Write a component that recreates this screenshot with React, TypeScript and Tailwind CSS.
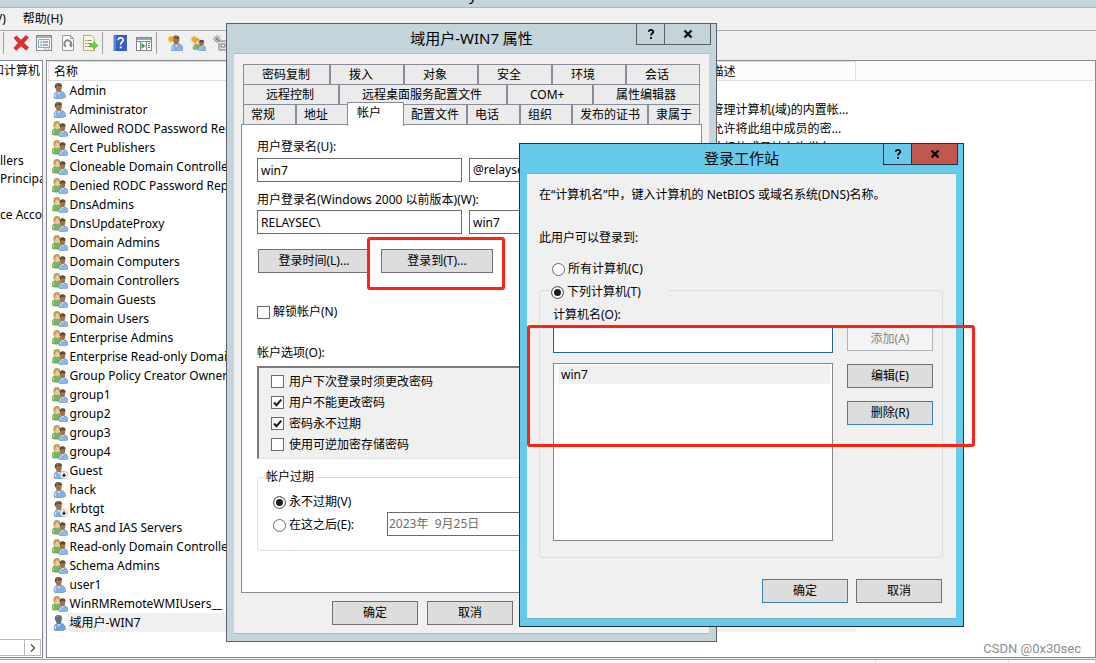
import React, { useId } from "react";

type Kind = "user" | "group" | "disabled" | "muted";

function PersonShape({ muted = false }: { muted?: boolean }) {
  return (
    <g>
      <path d="M2.200 15.200C1.700 11.800 2.600 9.300 5 8.300l4.500-.1c3 .9 4.200 3.200 4 6.300-2.600 1.600-8.500 1.900-11.300.7z" fill={muted ? "#6fa3d8" : "#84b1e4"} stroke="#4c7fbd" strokeWidth=".5" />
      <path d="M4 10.500c-.8 1.200-.9 2.700-.7 3.700" stroke="#c8e0f8" strokeWidth="1.200" fill="none" />
      <path d="M5.200 8.500l1.900 3 1.100-2.700z" fill="#f3f7fc" />
      <path d="M3.200 3.400C3.400 1.100 5 .2 7 .4c2.100.2 3.100 1.700 2.800 4-.2 2.400-1.100 4.900-2.800 4.900-2.100 0-3.600-3.100-3.800-5.900z" fill={muted ? "#5a7480" : "#a8703f"} />
      <path d="M2.900 5C2.300 1.700 3.900 0 6.500 0c2.500 0 3.800 1.300 3.400 3.300-1.900.2-3.400-.2-4.500-.8-.8.500-1.400 1.200-1.500 2.700z" fill={muted ? "#5b6d78" : "#5c4a3e"} />
      <path d="M4.500 1.700C5.500.9 6.500.8 7.500 1" stroke="#a49a92" strokeWidth=".8" fill="none" />
    </g>
  );
}

function GroupShape() {
  return (
    <g>
      <path d="M.3 13.600C0 10 .7 8 3.200 7.300l4.300.2c1.700 1 1.800 3.500 1.500 6-2.700.8-6 .9-8.700.1z" fill="#7ab55d" stroke="#4a8c38" strokeWidth=".5" />
      <path d="M1.700 9.500c-.5 1-.6 2-.5 3" stroke="#b5dca0" strokeWidth="1" fill="none" />
      <ellipse cx="4.900" cy="4.200" rx="3" ry="3.800" fill="#efc998" />
      <path d="M1.500 5.500C1 1.600 2.500 0 5 0c2.400 0 3.600 1.800 3.100 4.400C6.500 4 5.400 3 4.900 2.100 4.200 3.200 3.400 4 2.900 7.200z" fill="#c2a05c" />
      <path d="M7 15.300c-.4-3 .2-4.700 2.500-5.500h3.300c2.600.8 3.200 2.500 3 5.300-2.600.9-6.300.9-8.800.2z" fill="#8ab6e8" stroke="#4c7fbd" strokeWidth=".5" />
      <path d="M8.600 11.500c-.5.800-.5 1.800-.4 2.700" stroke="#d0e4fa" strokeWidth="1" fill="none" />
      <path d="M9.600 9.700l1.300 2 .8-2z" fill="#fff" />
      <ellipse cx="10.600" cy="6.400" rx="2.600" ry="3.600" fill="#a8703f" />
      <path d="M7.700 6.200c-.5-2.800.8-4 3-4s3.200 1.300 2.800 3.400c-1.600 0-2.700-.4-3.600-1-.7.400-1 1-1 1.800z" fill="#5c4a3e" />
    </g>
  );
}

function AccountIcon({ kind }: { kind: Kind }) {
  return (
    <svg viewBox="0 0 16 16" className="h-4 w-4 shrink-0" aria-hidden="true">
      {kind === "group" ? <GroupShape /> : <PersonShape muted={kind === "muted"} />}
      {kind === "disabled" && (
        <g>
          <circle cx="12" cy="11.800" r="3.700" fill="#fff" stroke="#9a9a9a" strokeWidth=".6" />
          <path d="M12 9.700v3M10.400 12l1.600 1.800 1.600-1.800z" stroke="#222" strokeWidth="1" fill="#222" />
        </g>
      )}
    </svg>
  );
}

function Spark() {
  return <path d="M4 0l.8 2.200L7 1.200 6 3.200 8.200 4 6 4.800l1 2-2.200-.9L4 8.200l-.8-2.300-2.200.9 1-2L0 4l2-.8-1-2 2.200 1z" fill="#f5a81c" />;
}

const tools: { name: string; gap: string; art: React.ReactNode }[] = [
  { name: "删除", gap: "ml-[9px]", art: <path d="M1 3l2.500-2L8 5.200 12.800.6 15.500 2.500 10.700 8l5 4.600-2.600 2.600L8 10.700 3.300 15.500.8 13 5.300 8z" fill="#e33030" stroke="#b01818" strokeWidth=".6" /> },
  { name: "属性", gap: "ml-[7px]", art: <g><rect x=".5" y=".5" width="15" height="15" fill="#fafafa" stroke="#858c94" /><path d="M1 2h14" stroke="#a8b0b8" strokeWidth="2" /><path d="M2.500 4.500h11v8h-11z" fill="#eef3f8" stroke="#9aa4ae" /><path d="M4 7h2M4 10h2" stroke="#2aa3d8" /><path d="M7 7h5M7 10h5" stroke="#5d6d7e" /><path d="M8 14h2M11.500 14h2" stroke="#8fa0b2" /></g> },
  { name: "刷新", gap: "ml-2", art: <g><path d="M2.500.5h8l3 3v12h-11z" fill="#f7f7f7" stroke="#9a9a9a" /><path d="M10.500.5v3h3" fill="none" stroke="#9a9a9a" /><path d="M6 11.500A3.300 3.300 0 1 1 10.800 10" fill="none" stroke="#858585" strokeWidth="1.800" /><path d="M8.500 9.500l4.300-.5-1.300 3.800z" fill="#858585" /></g> },
  { name: "导出列表", gap: "ml-[6px]", art: <g><path d="M1.500.5h8l3 3v12h-11z" fill="#fdf6cf" stroke="#b3ab84" /><path d="M3.500 5.500h1M3.500 8.500h1M3.500 11.500h1" stroke="#555" /><path d="M5.500 5.500h4M5.500 8.500h4M5.500 11.500h4" stroke="#8b8ba0" /><path d="M8 9h3.500V6.700L16 10.500l-4.500 3.800V12H8z" fill="#6fd044" stroke="#3a9a1c" strokeWidth=".5" /></g> },
  { name: "帮助", gap: "ml-[9px]", art: <g><rect x="2" y="0" width="12.500" height="16" fill="#3560c8" stroke="#1d3a8c" strokeWidth=".6" /><path d="M3 0v16" stroke="#7d9be6" strokeWidth="1.200" /><path d="M6.200 5.200c0-3.200 5-3.200 5-.2 0 2-2.500 2-2.500 4.700" fill="none" stroke="#fff" strokeWidth="1.700" /><rect x="7.800" y="11.300" width="1.900" height="1.900" fill="#fff" /></g> },
  { name: "查看", gap: "ml-2", art: <g><rect x=".5" y="2.500" width="15" height="13" fill="#fff" stroke="#7d858e" /><path d="M1 4h14" stroke="#9aa6b2" strokeWidth="2" /><path d="M1 6.500h14M4.500 7v8M10.500 7v8" stroke="#7d858e" /><path d="M5.500 8l4 3-4 3z" fill="#2fa838" /><path d="M12 8.500h2M12 10.500h2M12 12.500h2" stroke="#4a74b8" /></g> },
  { name: "新建用户", gap: "ml-[10px]", art: <g><g transform="translate(2.500 .5)"><PersonShape /></g><Spark /></g> },
  { name: "新建组", gap: "ml-[7px]", art: <g><g transform="translate(3 3) scale(.82)"><GroupShape /></g><Spark /></g> },
  { name: "新建组织单位", gap: "ml-[7px]", art: <g><path d="M4 6h10v9H6V8" fill="#e5e5e5" stroke="#777" /><path d="M8 9h4v3H8z" fill="#fff" stroke="#777" /><path d="M4 0v8M0 4h8M1 1l6 6M7 1L1 7" stroke="#888" /></g> },
];

const accounts: [string, Kind, string?][] = [
  ["Admin", "user"],
  ["Administrator", "user", "管理计算机(域)的内置帐..."],
  ["Allowed RODC Password Replication Group", "group", "允许将此组中成员的密..."],
  ["Cert Publishers", "group", "此组的成员被允许发布..."],
  ["Cloneable Domain Controllers", "group"],
  ["Denied RODC Password Replication Group", "group"],
  ["DnsAdmins", "group"],
  ["DnsUpdateProxy", "group"],
  ["Domain Admins", "group"],
  ["Domain Computers", "group"],
  ["Domain Controllers", "group"],
  ["Domain Guests", "group"],
  ["Domain Users", "group"],
  ["Enterprise Admins", "group"],
  ["Enterprise Read-only Domain Controllers", "group"],
  ["Group Policy Creator Owners", "group"],
  ["group1", "group"],
  ["group2", "group"],
  ["group3", "group"],
  ["group4", "group"],
  ["Guest", "disabled"],
  ["hack", "user"],
  ["krbtgt", "disabled"],
  ["RAS and IAS Servers", "group"],
  ["Read-only Domain Controllers", "group"],
  ["Schema Admins", "group"],
  ["user1", "user"],
  ["WinRMRemoteWMIUsers__", "group"],
  ["域用户-WIN7", "muted"],
];

const tree = ["和计算机", "", "", "", "", "llers", "Principals", "", "ce Accounts"];

function Check({ label, checked = false, gap = "gap-[3px]" }: { label: string; checked?: boolean; gap?: string }) {
  return (
    <label className={`flex items-center ${gap}`}>
      <span className="grid h-[13px] w-[13px]">
        <input type="checkbox" defaultChecked={checked} className="peer col-start-1 row-start-1 h-[13px] w-[13px] appearance-none border border-[#6b6b6b] bg-white" />
        <svg viewBox="0 0 13 13" className="pointer-events-none invisible col-start-1 row-start-1 h-[13px] w-[13px] peer-checked:visible" aria-hidden="true">
          <path d="M3 6.500l2.500 2.700L10.300 3.600" fill="none" stroke="#1e1e1e" strokeWidth="2.100" />
        </svg>
      </span>
      {label}
    </label>
  );
}

function Radio({ label, name, checked = false }: { label: string; name: string; checked?: boolean }) {
  return (
    <label className="flex items-center gap-[3px]">
      <input type="radio" name={name} defaultChecked={checked} className="h-[13px] w-[13px] appearance-none rounded-full border border-[#6b6b6b] bg-white checked:bg-[#1e1e1e] checked:shadow-[inset_0_0_0_2px_#fff]" />
      {label}
    </label>
  );
}

function Button({ children, width = "w-[86px]", tone = "normal" }: { children: React.ReactNode; width?: string; tone?: "normal" | "blue" | "off" }) {
  const look = {
    normal: "border-[#707070] bg-[#dddddd]",
    blue: "border-[#3c7fb1] bg-[#dddddd]",
    off: "border-[#adb2b5] bg-[#f4f4f4] text-[#838383]",
  }[tone];
  return (
    <button type="button" disabled={tone === "off"} className={`h-6 shrink-0 border ${width} ${look}`}>
      {children}
    </button>
  );
}

function Glyph({ kind }: { kind: "help" | "close" }) {
  return (
    <svg viewBox="0 0 10 10" className="h-[10px] w-[10px]" aria-hidden="true">
      {kind === "help" ? (
        <path d="M2.800 2.800C3 .3 7.300.3 7.300 2.700 7.300 4.400 5 4.200 5 6.600M5 8v2" fill="none" stroke="#000" strokeWidth="1.800" />
      ) : (
        <path d="M1.500 1.500l7 7M8.500 1.500l-7 7" stroke="#000" strokeWidth="2.300" />
      )}
    </svg>
  );
}

function Dialog({ title, place, active = false, children }: { title: string; place: string; active?: boolean; children: React.ReactNode }) {
  const id = useId();
  return (
    <section
      role="dialog"
      aria-labelledby={id}
      className={`absolute flex flex-col border px-[7px] pb-[7px] ${place} ${active ? "border-[#22343e] bg-[#66caea]" : "border-[#5c6068] bg-[#c3d5db]"}`}
    >
      <header className="grid h-[29px] shrink-0 grid-cols-1">
        <h2 id={id} className="col-start-1 row-start-1 self-center pb-[2px] text-center text-[15px] leading-5">{title}</h2>
        <div className={`col-start-1 row-start-1 -mt-px -mr-[2px] flex h-[22px] justify-self-end border ${active ? "border-[#22343e]" : "border-[#5c6068]"}`}>
          <button type="button" aria-label="帮助" className="grid w-[27px] place-items-center"><Glyph kind="help" /></button>
          <button type="button" aria-label="关闭" className={`grid w-[46px] place-items-center border-l ${active ? "border-[#22343e] bg-[#c1584f]" : "border-[#5c6068]"}`}><Glyph kind="close" /></button>
        </div>
      </header>
      <div className={`flex flex-1 flex-col border-y bg-[#f0f0f0] ${active ? "border-[#7fafc3]" : "border-[#b0bfc5]"}`}>{children}</div>
    </section>
  );
}

const upperTabs = [
  [["密码复制", "w-[87px]"], ["拨入", "w-[74px]"], ["对象", "w-[74px]"], ["安全", "w-[74px]"], ["环境", "w-[74px]"], ["会话", "flex-1"]],
  [["远程控制", "w-[96px]"], ["远程桌面服务配置文件", "w-[168px]"], ["COM+", "w-[86px]"], ["属性编辑器", "flex-1"]],
];

const lowerTabs = [["常规", "w-[53px]"], ["地址", "w-[50px]"], ["帐户", "w-[57px]"], ["配置文件", "w-[64px]"], ["电话", "w-[53px]"], ["组织", "w-[52px]"], ["发布的证书", "w-[76px]"], ["隶属于", "flex-1"]];

const field = "h-6 min-w-0 border border-[#6b6b6b] bg-white px-[3px] text-[12px]";

function PropertiesDialog() {
  return (
    <Dialog title="域用户-WIN7 属性" place="left-[226px] top-[23px] w-[491px]">
      <div className="mx-[9px] mt-[10px]" role="tablist">
        {upperTabs.map((row, i) => (
          <div key={i} className="flex h-5 border-t border-l border-[#8b8c99] bg-[#ebebeb]">
            {row.map(([name, width]) => (
              <button key={name} type="button" role="tab" className={`shrink-0 border-r-2 border-[#8b8c99] text-left whitespace-nowrap last:border-r ${i === 0 ? "pl-[18px]" : "pl-[22px]"} ${width}`}>{name}</button>
            ))}
          </div>
        ))}
        <div className="flex h-5 border-t border-l border-[#8b8c99]">
          {lowerTabs.map(([name, width]) =>
            name === "帐户" ? (
              <button key={name} type="button" role="tab" aria-selected="true" className={`z-10 -mt-[3px] -mb-[2px] border border-b-0 border-[#8b8c99] bg-white pb-[3px] pl-[9px] text-left ${width}`}>{name}</button>
            ) : (
              <button key={name} type="button" role="tab" className={`shrink-0 border-[#8b8c99] bg-[#ebebeb] pl-[7px] text-left whitespace-nowrap last:border-r ${name === "地址" ? "" : "border-r-2"} ${width}`}>{name}</button>
            ),
          )}
        </div>
      </div>
      <div role="tabpanel" className="mx-[7px] flex flex-col border border-[#8b8c99] bg-white px-[15px] pt-[14px] pb-[41px] leading-4">
        <label htmlFor="logon">用户登录名(U):</label>
        <div className="mt-[3px] flex gap-[7px]">
          <input id="logon" defaultValue="win7" className={`${field} w-[205px]`} />
          <select aria-label="域后缀" className={`${field} flex-1 appearance-none`}><option>@relaysec.com</option></select>
        </div>
        <label htmlFor="legacy" className="mt-[10px]">用户登录名(Windows 2000 以前版本)(W):</label>
        <div className="mt-[2px] flex gap-[7px]">
          <input id="legacy" defaultValue="RELAYSEC\" className={`${field} w-[205px]`} />
          <input aria-label="旧版用户名" defaultValue="win7" className={`${field} flex-1`} />
        </div>
        <div className="mt-[15px] flex gap-[11px] pl-px">
          <Button width="w-[112px]">登录时间(L)...</Button>
          <Button width="w-[112px]">登录到(T)...</Button>
        </div>
        <div className="mt-[31px]"><Check label="解锁帐户(N)" /></div>
        <p className="mt-[25px]">帐户选项(O):</p>
        <div className="mt-[5px] flex flex-col border-t-2 border-r border-b border-l-2 border-t-[#7a7a7a] border-r-[#e3e3e3] border-b-[#e3e3e3] border-l-[#7a7a7a] bg-[#f0f0f0] py-[3px] pl-3 *:h-[21px]">
          <Check gap="gap-[5px]" label="用户下次登录时须更改密码" />
          <Check gap="gap-[5px]" label="用户不能更改密码" checked />
          <Check gap="gap-[5px]" label="密码永不过期" checked />
          <Check gap="gap-[5px]" label="使用可逆加密存储密码" />
        </div>
        <fieldset className="mt-[10px] rounded-[3px] border border-[#d5dfe5] pb-[14px] pl-[15px]">
          <legend className="-ml-[9px] px-[2px]">帐户过期</legend>
          <div className="mt-[7px] flex h-5"><Radio name="expires" label="永不过期(V)" checked /></div>
          <div className="flex">
            <div className="flex w-[114px] pt-[2px]"><Radio name="expires" label="在这之后(E):" /></div>
            <input aria-label="过期日期" defaultValue="2023年  9月25日" className="h-6 w-[200px] border border-[#6b6b6b] bg-white px-px pb-[2px] text-[12px] text-[#6d6d6d]" />
          </div>
        </fieldset>
      </div>
      <div className="flex gap-[9px] px-[98px] pt-2 pb-2">
        <Button>确定</Button>
        <Button>取消</Button>
      </div>
    </Dialog>
  );
}

function WorkstationsDialog() {
  return (
    <Dialog title="登录工作站" active place="left-[519px] top-[143px] w-[445px]">
      <div className="flex flex-col px-3 pt-[13px] pb-[15px] leading-4">
        <p>在“计算机名”中，键入计算机的 NetBIOS 或域名系统(DNS)名称。</p>
        <p className="mt-[27px]">此用户可以登录到:</p>
        <div className="mt-[15px] pl-[13px]"><Radio name="scope" label="所有计算机(C)" /></div>
        <fieldset className="mt-[3px] mr-px rounded-[3px] border border-[#d5dfe5] pb-4 pl-[13px]">
          <legend className="-ml-[2px] w-[118px] pt-1"><Radio name="scope" label="下列计算机(T)" checked /></legend>
          <label htmlFor="computer" className="mt-[7px] block">计算机名(O):</label>
          <div className="mt-1 flex gap-[14px]">
            <div className="flex w-[280px] flex-col gap-[10px]">
              <input id="computer" className="h-[26px] border border-[#2e638d] bg-white px-1" />
              <ul className="h-[178px] border border-[#828790] bg-white py-px pr-[2px] pl-[5px]">
                <li className="h-[19px] bg-[#f0f0f0] px-[2px] leading-[20px]">win7</li>
              </ul>
            </div>
            <div className="flex flex-col gap-[13px]">
              <Button tone="off">添加(A)</Button>
              <Button>编辑(E)</Button>
              <Button tone="blue">删除(R)</Button>
            </div>
          </div>
        </fieldset>
        <div className="mt-[21px] flex justify-end gap-2 pr-[2px]">
          <Button tone="blue">确定</Button>
          <Button>取消</Button>
        </div>
      </div>
    </Dialog>
  );
}

export default function App() {
  return (
    <div className="relative flex h-screen flex-col overflow-hidden bg-[#f0f0f0] font-['Noto_Sans','Noto_Sans_CJK_SC',sans-serif] text-[12px] text-black">
      <header className="h-2 shrink-0 overflow-hidden border-b border-[#a9bac1] bg-[#c3d5db] pl-[366px]">
        <h1 className="-mt-4 text-[15px] leading-5">Active Directory</h1>
      </header>
      <nav className="flex h-[23px] shrink-0 items-center gap-[17px] border-b border-[#a9a9a9]">
        <button type="button" className="-ml-[5px]">V)</button>
        <button type="button">帮助(H)</button>
      </nav>
      <div role="toolbar" className="flex h-[29px] shrink-0 items-start pt-1 pl-[3px]">
        <span className="-mt-[3px] h-[22px] w-px bg-[#a0a0a0]" />
        {tools.map((tool) => (
          <React.Fragment key={tool.name}>
            {(tool.name === "帮助" || tool.name === "新建用户") && <span className="-mt-[3px] ml-1 h-[22px] w-px bg-[#a0a0a0]" />}
            <button type="button" aria-label={tool.name} className={`h-4 w-4 shrink-0 ${tool.gap}`}>
              <svg viewBox="0 0 16 16" className="h-4 w-4" aria-hidden="true">{tool.art}</svg>
            </button>
          </React.Fragment>
        ))}
      </div>
      <main className="flex min-h-0 flex-1 gap-[3px]">
        <aside className="flex w-[43px] shrink-0 flex-col overflow-hidden border border-l-0 border-[#828790] bg-white">
          <ul className="flex-1 pt-px">
            {tree.map((name, i) => (
              <li key={i} className={`h-[18px] leading-[18px] whitespace-nowrap ${i === 0 ? "-ml-2" : ""}`}>{name}</li>
            ))}
          </ul>
          <div className="mr-px mb-px flex h-[17px] justify-end border border-l-0 border-[#b8b8b8]">
            <button type="button" aria-label="向右滚动" className="grid w-4 place-items-center border-l border-[#b8b8b8]">
              <svg viewBox="0 0 8 8" className="h-2 w-2" aria-hidden="true"><path d="M2 .5L5.500 4 2 7.500" fill="none" stroke="#555" strokeWidth="1.400" /></svg>
            </button>
          </div>
        </aside>
        <div className="min-w-0 flex-1 overflow-hidden border border-[#828790] bg-white px-px">
          <table className="w-full table-fixed border-collapse text-left">
            <colgroup>
              <col className="w-[180px]" />
              <col className="w-[477px]" />
              <col className="w-[150px]" />
              <col />
            </colgroup>
            <thead>
              <tr className="h-[19px] border-b border-[#dfdfdf] bg-[#fcfcfc] *:p-0 *:font-normal *:leading-[17px]">
                <th className="border-t border-l border-[#dfdfdf]"><span className="pl-[5px]">名称</span></th>
                <th className="border-t border-[#dfdfdf]" />
                <th className="border-t border-r border-[#dfdfdf]"><span className="pl-[6px]">描述</span></th>
                <th />
              </tr>
            </thead>
            <tbody>
              {accounts.map(([name, kind, note]) => (
                <tr key={name} className="h-[19px] whitespace-nowrap *:p-0">
                  <td className="overflow-hidden">
                    <div className="flex h-[19px] items-center pl-[3px]">
                      <AccountIcon kind={kind} />
                      <span className={`h-[19px] min-w-0 flex-1 overflow-hidden pl-[2px] leading-[19px] ${kind === "muted" ? "bg-[#f0f0f0]" : ""}`}>{name}</span>
                    </div>
                  </td>
                  <td className={kind === "muted" ? "bg-[#f0f0f0]" : ""} />
                  <td className={kind === "muted" ? "bg-[#f0f0f0]" : ""}><span className="pl-[6px]">{note}</span></td>
                  <td />
                </tr>
              ))}
            </tbody>
          </table>
        </div>
      </main>
      <footer className="mt-px flex h-1 shrink-0 justify-end border-t border-[#a0a0a0] bg-[#fdfdfd]">
        <span className="w-[133px] border-l border-[#d7d7d7]" />
        <span className="w-[88px] border-x border-[#d7d7d7]" />
      </footer>

      <PropertiesDialog />
      <div className="pointer-events-none absolute top-[237px] left-[367px] h-[53px] w-[138px] rounded-[3px] border-3 border-[#ff2314]" />
      <WorkstationsDialog />
      <div className="pointer-events-none absolute top-[325px] left-[527px] h-[122px] w-[448px] rounded-[3px] border-3 border-[#ff2314]" />
      <p className="absolute right-[15px] bottom-[5px] font-['Roboto',sans-serif] text-[13px] leading-[18px] text-[#8c8c8c]">CSDN @0x30sec</p>
    </div>
  );
}
